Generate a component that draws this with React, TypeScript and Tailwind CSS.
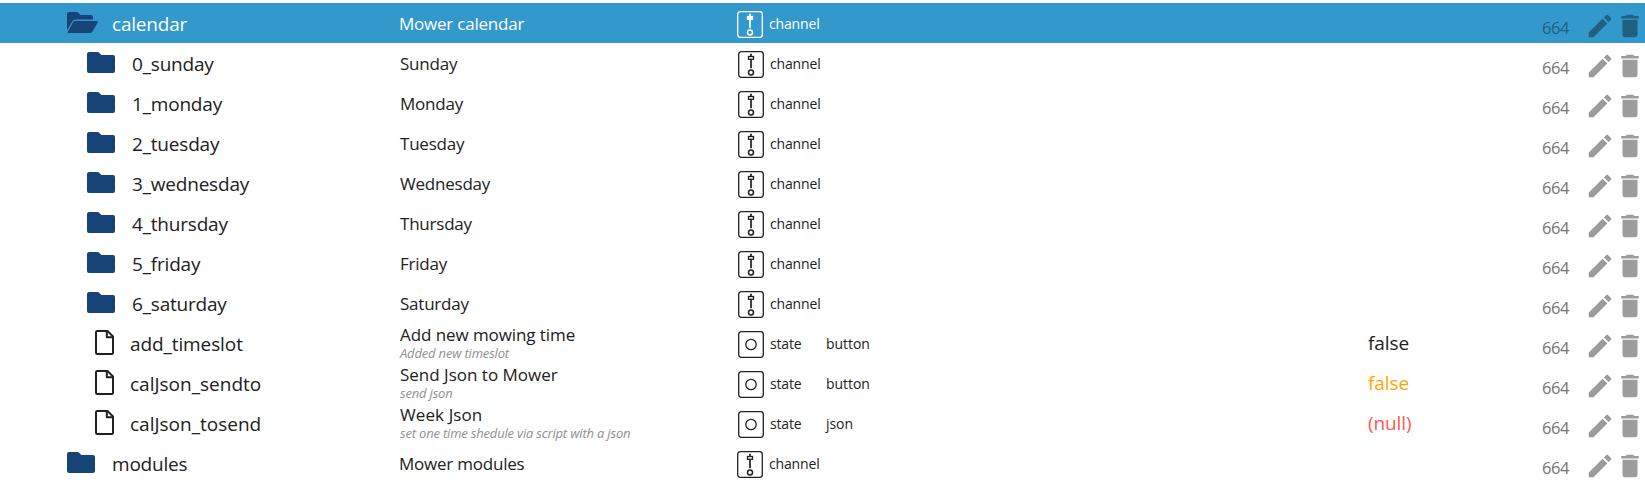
import React from 'react';

type Row = {
  id: string;
  name: string;
  desc?: string;
  kind: 'open' | 'folder' | 'file';
  root?: boolean;
  role?: string;
  value?: string;
  valueClass?: string;
  idTrack?: string;
  nameTrack?: string;
};

const rows: Row[] = [
  { id: 'calendar', name: 'Mower calendar', kind: 'open', root: true },
  { id: '0_sunday', name: 'Sunday', kind: 'folder' },
  { id: '1_monday', name: 'Monday', kind: 'folder' },
  { id: '2_tuesday', name: 'Tuesday', kind: 'folder' },
  { id: '3_wednesday', name: 'Wednesday', kind: 'folder' },
  { id: '4_thursday', name: 'Thursday', kind: 'folder' },
  { id: '5_friday', name: 'Friday', kind: 'folder' },
  { id: '6_saturday', name: 'Saturday', kind: 'folder' },
  { id: 'add_timeslot', name: 'Add new mowing time', desc: 'Added new timeslot', kind: 'file', role: 'button', value: 'false', valueClass: 'text-[#212121]', idTrack: 'tracking-[-0.1px]', nameTrack: 'tracking-[-0.08px]' },
  { id: 'calJson_sendto', name: 'Send Json to Mower', desc: 'send json', kind: 'file', role: 'button', value: 'false', valueClass: 'text-[#ffa500]', idTrack: 'tracking-normal', nameTrack: 'tracking-normal' },
  { id: 'calJson_tosend', name: 'Week Json', desc: 'set one time shedule via script with a json', kind: 'file', role: 'json', value: '(null)', valueClass: 'text-[#ff5555]', idTrack: 'tracking-normal', nameTrack: 'tracking-[0.1px]' },
  { id: 'modules', name: 'Mower modules', kind: 'folder', root: true },
];

function FolderIcon() {
  return (
    <svg width="28" height="21" viewBox="0 0 28 21" fill="#174477">
      <path d="M2 0h8.500q1 0 1.700.8L14.300 3H26q2 0 2 2v14q0 2-2 2H2q-2 0-2-2V2Q0 0 2 0Z" />
    </svg>
  );
}

function FolderOpenIcon() {
  return (
    <svg width="31" height="21" viewBox="0 0 31 21" fill="#174477">
      <path d="M2 0h7.600q1 0 1.600.7L13.300 3H24q2 0 2 2v2.600H8.500Q6.300 7.600 5.200 9.500L0 18.500V2Q0 0 2 0Z" />
      <path d="M8.200 9H30q1.500 0 .8 1.300l-5.400 9.400q-.8 1.300-2.300 1.300H1.500q-1.500 0-.7-1.300l5.200-9.400Q6.800 9 8.200 9Z" />
    </svg>
  );
}

function FileIcon() {
  return (
    <svg width="19" height="25" viewBox="0 0 19 25" fill="none" stroke="#212121" strokeWidth="2" strokeLinejoin="round">
      <path d="M2.300 1H12.500L18 6.500V22.700Q18 24 16.700 24H2.300Q1 24 1 22.700V2.300Q1 1 2.300 1Z" />
      <path d="M11.800 1V7.200H18" />
    </svg>
  );
}

function TypeIcon({ channel, light }: { channel: boolean; light: boolean }) {
  return (
    <svg width="26" height="27" viewBox="0 0 26 27" fill="none" className={`mt-[3px] ${light ? 'text-white' : 'text-[#212121]'}`} stroke="currentColor" strokeWidth="1.3">
      <rect x="0.700" y="0.700" width="24.600" height="25.600" rx="2.500" />
      {channel ? (
        <g>
          <path d="M13 2.800V5M13 8.500V17.300" strokeWidth="1.700" />
          <rect x="10.500" y="5.500" width="5" height="2.800" fill={light ? 'currentColor' : 'none'} />
          <circle cx="13" cy="21.500" r="2.500" strokeWidth="1.500" />
        </g>
      ) : (
        <circle cx="13" cy="13.500" r="5.200" />
      )}
    </svg>
  );
}

function TreeRow({ row }: { row: Row }) {
  const active = row.kind === 'open';
  return (
    <div className={`flex h-10 ${active ? 'bg-[#3399cc] text-white' : 'text-[#212121]'}`}>
      <div className={`flex w-[399px] shrink-0 items-center ${row.root ? 'pl-[67px]' : row.kind === 'file' ? 'pl-[95px]' : 'pl-[87px]'}`}>
        <div className={`mb-px shrink-0 ${row.kind === 'file' ? 'w-[35px]' : 'w-[45px]'}`}>
          {row.kind === 'open' ? <FolderOpenIcon /> : row.kind === 'folder' ? <FolderIcon /> : <FileIcon />}
        </div>
        <span className={`pt-px text-[19px] leading-6 ${row.idTrack ?? 'tracking-[-0.2px]'}`}>{row.id}</span>
      </div>
      <div className={`flex w-[338px] shrink-0 flex-col ${row.desc ? 'pt-0.5' : 'pt-[11px]'} ${row.root ? '' : 'pl-px'}`}>
        <span className={`text-[17px] leading-5 ${row.nameTrack ?? 'tracking-[-0.22px]'}`}>{row.name}</span>
        {row.desc && <span className="text-[13px] leading-4 tracking-[-0.18px] text-[#909090] italic">{row.desc}</span>}
      </div>
      <div className={`flex w-[89px] shrink-0 items-center gap-1.5 ${row.root ? '' : 'pl-px'}`}>
        <TypeIcon channel={!row.role} light={active} />
        <span className="pt-px text-[14px] leading-5 tracking-[-0.15px]">{row.kind === 'file' ? 'state' : 'channel'}</span>
      </div>
      <div className="flex w-[542px] shrink-0 items-center pt-px text-[14px] tracking-[-0.05px]">{row.role}</div>
      <div className={`flex w-[174px] shrink-0 items-center text-[19px] tracking-[-0.1px] ${row.valueClass ?? ''}`}>{row.value}</div>
      <div className={`flex items-center pt-1.5 ${active ? 'text-[#21617f]' : 'text-[#9c9c9c]'}`}>
        <span className={`w-[43px] pt-[3px] text-[16.5px] leading-5 tracking-[-0.4px] ${active ? '' : 'text-[#757575]'}`}>664</span>
        <svg width="30" height="30" viewBox="0 0 24 24" fill="currentColor">
          <path d="M3 17.250V21h3.750L17.810 9.940l-3.750-3.750L3 17.250zM20.710 7.040c.39-.39.39-1.020 0-1.410l-2.340-2.340a.996.996 0 0 0-1.410 0l-1.830 1.830 3.750 3.750 1.830-1.830z" />
        </svg>
        <svg width="30" height="30" viewBox="0 0 24 24" fill="currentColor">
          <path d="M6 19c0 1.100.9 2 2 2h8c1.100 0 2-.9 2-2V7H6v12zM19 4h-3.500l-1-1h-5l-1 1H5v2h14V4z" />
        </svg>
      </div>
    </div>
  );
}

export default function App() {
  return (
    <div className="h-[482px] w-[1645px] overflow-hidden bg-white pt-[3px] font-['Open_Sans','Noto_Sans',sans-serif]">
      {rows.map((row) => (
        <TreeRow key={row.id} row={row} />
      ))}
    </div>
  );
}
